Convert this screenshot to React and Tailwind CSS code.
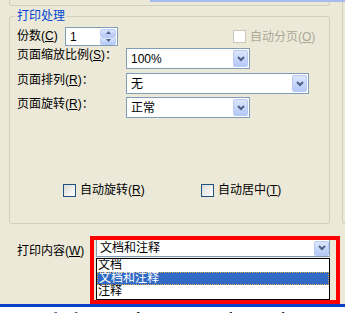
const FONT = "font-['Liberation_Sans','Noto_Sans_CJK_SC',sans-serif]"

function Chevron() {
  return (
    <svg width="8" height="6" viewBox="0 0 8 6">
      <polyline points="1,1 4,4 7,1" fill="none" stroke="#4D6185" strokeWidth="2" />
    </svg>
  )
}

function DropBtn({ h = 'h-[17px]' }) {
  return (
    <div className={`w-[15px] ${h} rounded-[2px] border border-[#B9CBF3] bg-gradient-to-b from-[#DCE6FD] to-[#B4C9F8] flex items-center justify-center`}>
      <Chevron />
    </div>
  )
}

function SpinBtn({ up }) {
  return (
    <div className="w-[16px] h-[8px] rounded-[2px] border border-[#B9CBF3] bg-gradient-to-b from-[#DCE6FD] to-[#B4C9F8] flex items-center justify-center">
      <svg width="5" height="3" viewBox="0 0 5 3">
        <path d={up ? 'M2.5 0L5 3H0z' : 'M0 0h5L2.5 3z'} fill="#4D6185" />
      </svg>
    </div>
  )
}

function SpinBox() {
  return (
    <div className="w-[53px] h-[19px] border border-[#7F9DB9] bg-white flex items-center justify-between pl-[4px] pr-[1px]">
      <span>1</span>
      <div className="flex flex-col">
        <SpinBtn up />
        <SpinBtn />
      </div>
    </div>
  )
}

function Select({ value, width }) {
  return (
    <div className={`${width} h-[21px] border border-[#7F9DB9] bg-white flex items-center justify-between pl-[4px] pr-[1px]`}>
      <span>{value}</span>
      <DropBtn />
    </div>
  )
}

function Check({ label, k }) {
  return (
    <div className="flex items-center gap-[4px]">
      <span className="w-[13px] h-[13px] border border-[#1C5180] bg-gradient-to-br from-[#DCDBD5] to-white" />
      <span>
        {label}(<u>{k}</u>)
      </span>
    </div>
  )
}

export default function App() {
  return (
    <div className={`relative w-[345px] h-[313px] overflow-hidden bg-[#ECE9D8] text-[12px] leading-[14px] text-black ${FONT}`}>
      <div className="absolute top-0 left-[150px] right-0 h-[2px] bg-[#A7BCEB]" />

      <div className="flex h-[224px]">
        <div className="ml-[9px] w-[321px] flex flex-col">
          <div className="h-[6px] border-x border-b border-[#D0D0BF] rounded-b-[3px]" />
          <fieldset className="mt-[3px] h-[215px] border border-[#D0D0BF] rounded-[3px]">
            <legend className="ml-[5px] px-[2px] text-[#0046D5]">打印处理</legend>
            <div className="pl-[7px] pt-[4px] flex flex-col">
              <div className="flex items-center h-[19px]">
                <span className="w-[48px] -mt-[2px]">
                  份数(<u>C</u>)
                </span>
                <SpinBox />
                <div className="ml-[115px] flex items-center gap-[4px] text-[#ACA899]">
                  <span className="w-[13px] h-[13px] border border-[#CAC8BB] bg-white" />
                  <span>
                    自动分页(<u>O</u>)
                  </span>
                </div>
              </div>

              <div className="flex items-start mt-[2px]">
                <span className="w-[109px]">
                  页面缩放比例(<u>S</u>)：
                </span>
                <Select value="100%" width="w-[124px]" />
              </div>
              <div className="flex items-start mt-[4px]">
                <span className="w-[109px]">
                  页面排列(<u>R</u>)：
                </span>
                <Select value="无" width="w-[183px]" />
              </div>
              <div className="flex items-start mt-[3px]">
                <span className="w-[109px]">
                  页面旋转(<u>R</u>)：
                </span>
                <Select value="正常" width="w-[124px]" />
              </div>

              <div className="flex items-center mt-[65px] pl-[46px]">
                <div className="w-[138px]">
                  <Check label="自动旋转" k="R" />
                </div>
                <Check label="自动居中" k="T" />
              </div>
            </div>
          </fieldset>
        </div>
        <div className="ml-[12px] flex-1 border-l border-b border-[#D0D0BF] rounded-bl-[3px]" />
      </div>

      <div className="flex items-start h-[80px] pl-[17px]">
        <span className="w-[73px] mt-[20px]">
          打印内容(<u>W</u>)
        </span>
        <div className="mt-[12px] w-[250px] h-[68px] border-4 border-[#FF0000] pl-[2px] flex flex-col">
          <div className="w-[234px] h-[17px] border-x border-b border-[#7F9DB9] bg-white flex items-center justify-between pl-[3px]">
            <span>文档和注释</span>
            <DropBtn h="h-[15px]" />
          </div>
          <div className="mt-[1px] w-[234px] h-[42px] border border-black bg-white flex flex-col">
            <div className="h-[13px] pl-[1px] leading-[13px]">文档</div>
            <div className="h-[13px] pl-[1px] leading-[11px] bg-[#316AC5] text-white border border-dotted border-[#D7A95A]">文档和注释</div>
            <div className="h-[13px] pl-[1px] leading-[13px]">注释</div>
          </div>
        </div>
      </div>

      <div className="h-[3px] bg-[#0C3FC8]" />
      <div className="h-[6px] overflow-hidden bg-white">
        <div className="mt-[2px] pl-[6px] whitespace-nowrap font-['Liberation_Serif',serif] italic text-[16px] leading-[20px] text-black">
          i&nbsp;&nbsp;&nbsp;&nbsp;&nbsp;&nbsp;&nbsp;&nbsp;of&nbsp;&nbsp;&nbsp;&nbsp;f&nbsp;&nbsp;&nbsp;&nbsp;&nbsp;&nbsp;&nbsp;&nbsp;&nbsp;&nbsp;&nbsp;&nbsp;&nbsp;&nbsp;d&nbsp;&nbsp;&nbsp;&nbsp;&nbsp;&nbsp;&nbsp;&nbsp;&nbsp;&nbsp;&nbsp;&nbsp;t&nbsp;&nbsp;&nbsp;&nbsp;&nbsp;&nbsp;&nbsp;&nbsp;&nbsp;l&nbsp;&nbsp;&nbsp;&nbsp;&nbsp;&nbsp;&nbsp;&nbsp;&nbsp;&nbsp;&nbsp;&nbsp;h
        </div>
      </div>
    </div>
  )
}
